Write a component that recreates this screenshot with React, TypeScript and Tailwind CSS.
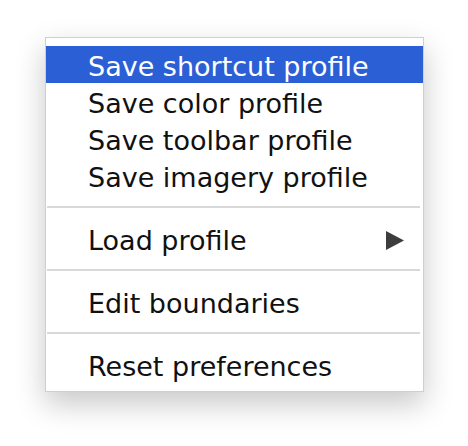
import React from 'react'

const font = { fontFamily: '"DejaVu Sans", "Liberation Sans", sans-serif' }

function Item({ label, active, submenu }: { label: string; active?: boolean; submenu?: boolean }) {
  return (
    <div
      className={`flex h-[37px] items-center justify-between pl-[42px] pr-[19px] text-[27px] leading-none ${
        active ? 'bg-[#2b5fd5] text-white' : 'text-[#111]'
      }`}
    >
      <span className="pt-[3px]">{label}</span>
      {submenu && (
        <svg width="18" height="19" viewBox="0 0 18 19" className="mt-[4px]">
          <polygon points="0,0 18,9.5 0,19" fill="#3d3d3d" />
        </svg>
      )}
    </div>
  )
}

function Separator() {
  return (
    <div className="flex h-[26px] items-center mr-[3px] ml-[1px]">
      <div className="h-[2px] w-full bg-[#d8d8d8]" />
    </div>
  )
}

export default function App() {
  return (
    <div className="min-h-screen bg-white pt-[37px] pl-[45px]" style={font}>
      <div className="w-[379px] h-[355px] bg-white border border-[#cfcfcf] pt-[8px] shadow-[0_12px_28px_rgba(0,0,0,0.22)]">
        <Item label="Save shortcut profile" active />
        <Item label="Save color profile" />
        <Item label="Save toolbar profile" />
        <Item label="Save imagery profile" />
        <Separator />
        <Item label="Load profile" submenu />
        <Separator />
        <Item label="Edit boundaries" />
        <Separator />
        <Item label="Reset preferences" />
      </div>
    </div>
  )
}
